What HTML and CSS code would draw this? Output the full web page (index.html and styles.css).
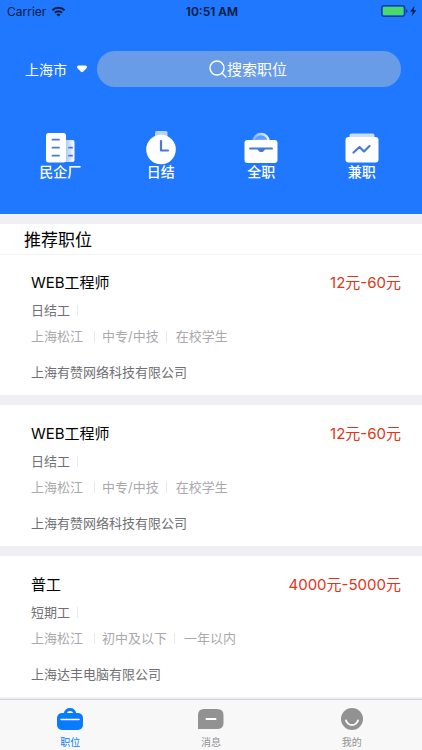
FILE: index.html
```html
<!DOCTYPE html>
<html lang="zh-CN">
<head>
<meta charset="utf-8">
<meta name="viewport" content="width=device-width, initial-scale=1">
<title>推荐职位</title>
<link rel="stylesheet" href="styles.css">
</head>
<body>
<header class="hero">
  <div class="status">
    <span class="carrier">Carrier
      <svg width="15" height="11" viewBox="0 0 14 11" fill="none" stroke="currentColor" stroke-width="2"><path d="M.9 4.3a8.6 8.6 0 0 1 12.2 0M3.300 6.700a5.200 5.200 0 0 1 7.400 0"/><path d="M7 10.600 4.900 8.500a3 3 0 0 1 4.200 0z" fill="currentColor" stroke="none"/></svg>
    </span>
    <time class="clock">10:51 AM</time>
    <span class="battery">
      <svg width="36" height="12" viewBox="0 0 36 12"><rect x=".7" y=".7" width="23" height="10.600" rx="2.200" fill="#1f78ff" stroke="#123f91" stroke-width="1.200"/><rect x="2" y="2" width="20.400" height="8" rx="1" fill="#4cd964"/><path d="M25 4v4q1.500-.6 1.500-2T25 4z" fill="#123f91"/><path d="M33.500 1 29.200 6.600h2.600L30.800 11l4.500-5.700h-2.700z" fill="#071a3a"/></svg>
    </span>
  </div>
  <div class="searchbar">
    <button class="city" type="button">上海市
      <svg width="12" height="8" viewBox="0 0 12 8" fill="#fff"><path d="M2.500.5h7q1.500 0 1.500 1.500 0 .8-.7 1.500L7 6.800q-1 .8-2 0L1.700 3.500Q1 2.800 1 2 1 .5 2.500.5z"/></svg>
    </button>
    <label class="search">
      <svg width="18" height="18" viewBox="0 0 18 18" fill="none" stroke="#fff" stroke-width="1.400" stroke-linecap="round"><circle cx="8" cy="8" r="7"/><path d="m13 13 4 4"/></svg>
      <input type="text" placeholder="搜索职位" aria-label="搜索职位">
    </label>
  </div>
  <nav class="categories">
    <a href="#factory">
      <svg width="36" height="34" viewBox="0 0 36 34"><defs><linearGradient id="fade"><stop offset="0" stop-color="#fff" stop-opacity=".45"/><stop offset="1" stop-color="#fff"/></linearGradient></defs><rect x="20" y="9" width="12.500" height="22" rx="2" fill="url(#fade)"/><rect x="4" y="2" width="20" height="29.500" rx="2.500" fill="#fff"/><g stroke="#4779d6" stroke-width="1.800" stroke-linecap="round"><path d="M10.500 8.700h6.500M10.500 16.700h6.500M10.500 24.700h6.500M27 16.700h3M27 24.700h3"/></g></svg>
      民企厂</a>
    <a href="#daily">
      <svg width="36" height="34" viewBox="0 0 36 34"><rect x="12" y="0" width="12.500" height="7" rx="1.500" fill="#b9d3ff"/><circle cx="18" cy="18.500" r="14.800" fill="#fff"/><path d="M18 10v9.500h7" fill="none" stroke="#4779d6" stroke-width="2.200" stroke-linecap="round" stroke-linejoin="round"/></svg>
      日结</a>
    <a href="#fulltime">
      <svg width="36" height="34" viewBox="0 0 36 34"><defs><linearGradient id="handle"><stop offset="0" stop-color="#7fb1ff"/><stop offset="1" stop-color="#f2f7ff"/></linearGradient></defs><path d="M10.500 10a7.500 7 0 0 1 15 0z" fill="#5f9dff" stroke="url(#handle)" stroke-width="2.400"/><rect x="1.500" y="9" width="33" height="23" rx="3" fill="#fff"/><path d="M7 17.500h22" stroke="#4779d6" stroke-width="2" stroke-linecap="round"/><path d="M14.500 18h7.500q-1 3-2.500 3h-2.500q-1.500 0-2.500-3z" fill="#4779d6"/></svg>
      全职</a>
    <a href="#parttime">
      <svg width="36" height="34" viewBox="0 0 36 34"><rect x="5.500" y="2.500" width="25" height="8" rx="2" fill="#c9deff"/><rect x="1.500" y="6" width="33" height="25.500" rx="3" fill="#fff"/><path d="m9.500 21.500 6-5.500 4.500 4.500 5.500-5.500" fill="none" stroke="#4779d6" stroke-width="2.200" stroke-linecap="round" stroke-linejoin="round"/></svg>
      兼职</a>
  </nav>
</header>
<main class="jobs">
  <h1 class="jobs-title">推荐职位</h1>
  <article class="job">
    <div class="job-head"><h2>WEB工程师</h2><span class="pay">12元-60元</span></div>
    <p class="kind"><span>日结工</span></p>
    <ul class="tags"><li>上海松江</li><li>中专/中技</li><li>在校学生</li></ul>
    <p class="company">上海有赞网络科技有限公司</p>
  </article>
  <article class="job">
    <div class="job-head"><h2>WEB工程师</h2><span class="pay">12元-60元</span></div>
    <p class="kind"><span>日结工</span></p>
    <ul class="tags"><li>上海松江</li><li>中专/中技</li><li>在校学生</li></ul>
    <p class="company">上海有赞网络科技有限公司</p>
  </article>
  <article class="job">
    <div class="job-head"><h2>普工</h2><span class="pay">4000元-5000元</span></div>
    <p class="kind"><span>短期工</span></p>
    <ul class="tags"><li>上海松江</li><li>初中及以下</li><li>一年以内</li></ul>
    <p class="company">上海达丰电脑有限公司</p>
  </article>
</main>
<nav class="tabbar">
  <a class="active" href="#jobs" aria-current="page">
    <svg width="28" height="24" viewBox="0 0 28 24"><path d="M9 7q1-4.500 5-4.500T19 7" fill="none" stroke="currentColor" stroke-width="3"/><rect x="1" y="6" width="26" height="17" rx="5" fill="currentColor"/><path d="M5 12.500h18" stroke="#fff" stroke-width="1.600" stroke-linecap="round"/></svg>
    职位</a>
  <a href="#messages">
    <svg width="28" height="24" viewBox="0 0 28 24"><path d="M7 2h13q6.500 0 6.500 6v8q0 6-6.500 6H1V8q0-6 6-6z" fill="currentColor"/><path d="M9.500 12h9" stroke="#fff" stroke-width="2" stroke-linecap="round"/></svg>
    消息</a>
  <a href="#me">
    <svg width="28" height="24" viewBox="0 0 28 24"><circle cx="14" cy="12" r="11" fill="currentColor"/><path d="M8 13.500q1.800 4.500 6 4.500t6-4.500" fill="none" stroke="#fff" stroke-width="1.900" stroke-linecap="round"/></svg>
    我的</a>
</nav>
</body>
</html>
```
FILE: styles.css
```css
* {
  box-sizing: border-box;
}

body {
  display: flex;
  flex-direction: column;
  min-height: 100vh;
  margin: 0;
  background: #efeff4;
  color: #000;
  font-family: Inter, "Noto Sans CJK SC", sans-serif;
}

h1, h2, p, ul {
  margin: 0;
  padding: 0;
  font-weight: 400;
}

a {
  color: inherit;
  text-decoration: none;
}

svg {
  display: block;
  flex: none;
}

.hero {
  padding-bottom: 36px;
  background: #1f78ff;
  color: #fff;
}

.status {
  display: grid;
  grid-template-columns: 1fr auto 1fr;
  align-items: center;
  height: 22px;
  padding: 0 5px 0 7px;
  color: #071a3a;
  font-size: 12px;
}

.carrier {
  display: flex;
  align-items: center;
  gap: 5px;
}

.clock {
  font-weight: 600;
}

.battery {
  justify-self: end;
}

.searchbar {
  display: flex;
  align-items: center;
  gap: 9px;
  padding: 29px 21px 0 25px;
}

.city {
  display: flex;
  align-items: center;
  gap: 9px;
  padding: 0;
  border: 0;
  background: none;
  color: #fff;
  font: inherit;
  font-size: 14px;
}

.search {
  display: flex;
  flex: 1;
  align-items: center;
  justify-content: center;
  height: 36px;
  border-radius: 18px;
  background: #699ce6;
}

.search input {
  width: 62px;
  padding: 0;
  border: 0;
  outline: 0;
  background: none;
  color: #fff;
  font: inherit;
  font-size: 15px;
}

.search input::placeholder {
  color: #fff;
  opacity: 1;
}

.categories {
  display: grid;
  grid-template-columns: repeat(4, 1fr);
  padding: 44px 10px 0;
}

.categories a {
  display: flex;
  flex-direction: column;
  align-items: center;
  font-size: 14px;
  font-weight: 500;
  line-height: 13px;
}

.jobs {
  display: flex;
  flex: 1;
  flex-direction: column;
  gap: 10px;
  padding-top: 10px;
}

.jobs-title {
  position: relative;
  margin-bottom: -10px;
  padding: 2px 0 0 24px;
  background: #fff;
  box-shadow: 0 1px #f4f4f7;
  font-size: 17px;
  line-height: 28px;
}

.job {
  padding: 17px 21px 12px 31px;
  background: #fff;
}

.job-head {
  display: flex;
  justify-content: space-between;
  line-height: 24px;
}

.job h2,
.pay {
  font-size: 15px;
}

.pay {
  color: #e03518;
}

.kind,
.tags,
.company {
  font-size: 13px;
}

.kind {
  padding: 4px 0;
  color: #6f6f74;
  line-height: 22px;
}

.kind span {
  padding-right: 8px;
  background: linear-gradient(#e8e8ee, #e8e8ee) right / 1px 11px no-repeat;
}

.tags {
  display: flex;
  color: #a9a9ac;
  line-height: 22px;
  list-style: none;
}

.tags li {
  padding: 0 8px 0 7px;
}

.tags li:first-child {
  padding: 0 12px 0 0;
}

.tags li:last-child {
  padding: 0 0 0 9px;
}

.tags li:not(:last-child) {
  background: linear-gradient(#e8e8ee, #e8e8ee) right / 1px 11px no-repeat;
}

.company {
  padding-top: 14px;
  color: #6f6f74;
  line-height: 22px;
}

.tabbar {
  position: sticky;
  bottom: 0;
  display: grid;
  grid-template-columns: repeat(3, 1fr);
  border-top: 1px solid #d0d2de;
  background: #f8f8f9;
}

.tabbar a {
  display: flex;
  flex-direction: column;
  align-items: center;
  gap: 4px;
  padding: 7px 0 0;
  color: #929292;
  font-size: 10px;
  font-weight: 400;
  line-height: 15px;
}

.tabbar .active {
  color: #087bff;
}
```
